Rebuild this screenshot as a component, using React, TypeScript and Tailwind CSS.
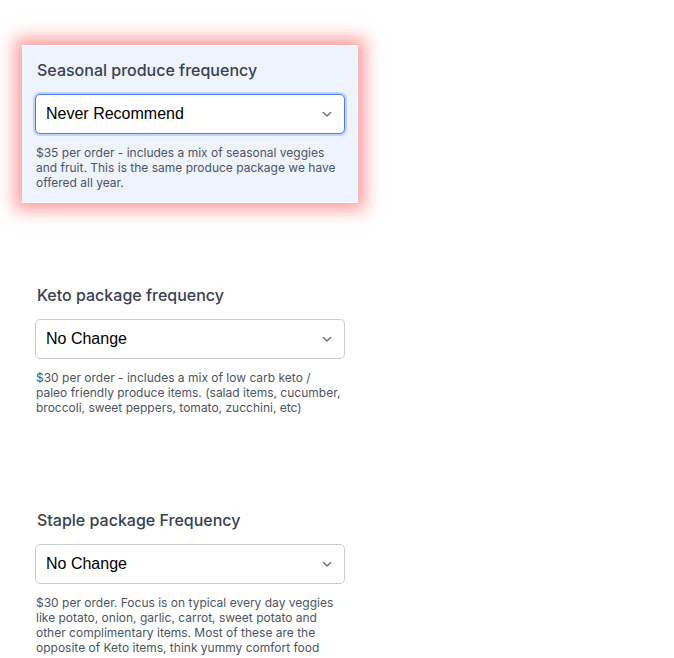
import { useState } from "react";

interface Field {
  id: string;
  label: string;
  value: string;
  help: string;
  highlight?: boolean;
}

const options = ["No Change", "Never Recommend", "Every Week", "Every Other Week", "Once a Month"];

const fields: Field[] = [
  {
    id: "seasonal",
    label: "Seasonal produce frequency",
    value: "Never Recommend",
    help: "$35 per order - includes a mix of seasonal veggies and fruit. This is the same produce package we have offered all year.",
    highlight: true,
  },
  {
    id: "keto",
    label: "Keto package frequency",
    value: "No Change",
    help: "$30 per order - includes a mix of low carb keto / paleo friendly produce items. (salad items, cucumber, broccoli, sweet peppers, tomato, zucchini, etc)",
  },
  {
    id: "staple",
    label: "Staple package Frequency",
    value: "No Change",
    help: "$30 per order. Focus is on typical every day veggies like potato, onion, garlic, carrot, sweet potato and other complimentary items. Most of these are the opposite of Keto items, think yummy comfort food",
  },
];

function Chevron() {
  return (
    <svg
      width="16"
      height="16"
      viewBox="0 0 20 20"
      fill="none"
      stroke="#6b7280"
      strokeWidth="1.8"
      strokeLinecap="round"
      strokeLinejoin="round"
      className="pointer-events-none absolute right-[10px] top-1/2 -translate-y-1/2"
    >
      <path d="M5.5 8l4.5 4.5 4.5-4.5" />
    </svg>
  );
}

function FrequencyField({ field }: { field: Field }) {
  const [value, setValue] = useState(field.value);
  return (
    <div
      className={
        field.highlight
          ? "w-[336px] border border-white bg-[#eff3fe] px-3 pt-[12px] pb-[12px] shadow-[0_0_16px_7px_rgba(252,90,90,0.6)]"
          : "w-[336px] border border-transparent px-3 pt-[12px] pb-[12px]"
      }
    >
      <label
        htmlFor={field.id}
        className="block pl-[2px] text-base leading-6 font-medium text-[#374151]"
      >
        {field.label}
      </label>
      <div className="relative mt-3">
        <select
          id={field.id}
          value={value}
          onChange={(e) => setValue(e.target.value)}
          className={
            field.highlight
              ? "h-10 w-[310px] appearance-none rounded-[5px] border border-[#4f7bf0] bg-white pl-[10px] font-['Liberation_Sans',Arial,sans-serif] text-base text-black shadow-[0_0_0_2px_#c4d2fb] outline-none"
              : "h-10 w-[310px] appearance-none rounded-[5px] border border-[#c9ccd2] bg-white pl-[10px] font-['Liberation_Sans',Arial,sans-serif] text-base text-black outline-none"
          }
        >
          {options.map((o) => (
            <option key={o}>{o}</option>
          ))}
        </select>
        <Chevron />
      </div>
      <p className="mt-[11px] pl-[1px] text-xs leading-[15px] text-[#4b5563]">{field.help}</p>
    </div>
  );
}

export default function App() {
  return (
    <div className="min-h-screen bg-white font-['Inter',sans-serif]">
      <div className="flex flex-col gap-[67px] pl-[22px] pt-[45px]">
        {fields.map((f) => (
          <FrequencyField key={f.id} field={f} />
        ))}
      </div>
    </div>
  );
}
